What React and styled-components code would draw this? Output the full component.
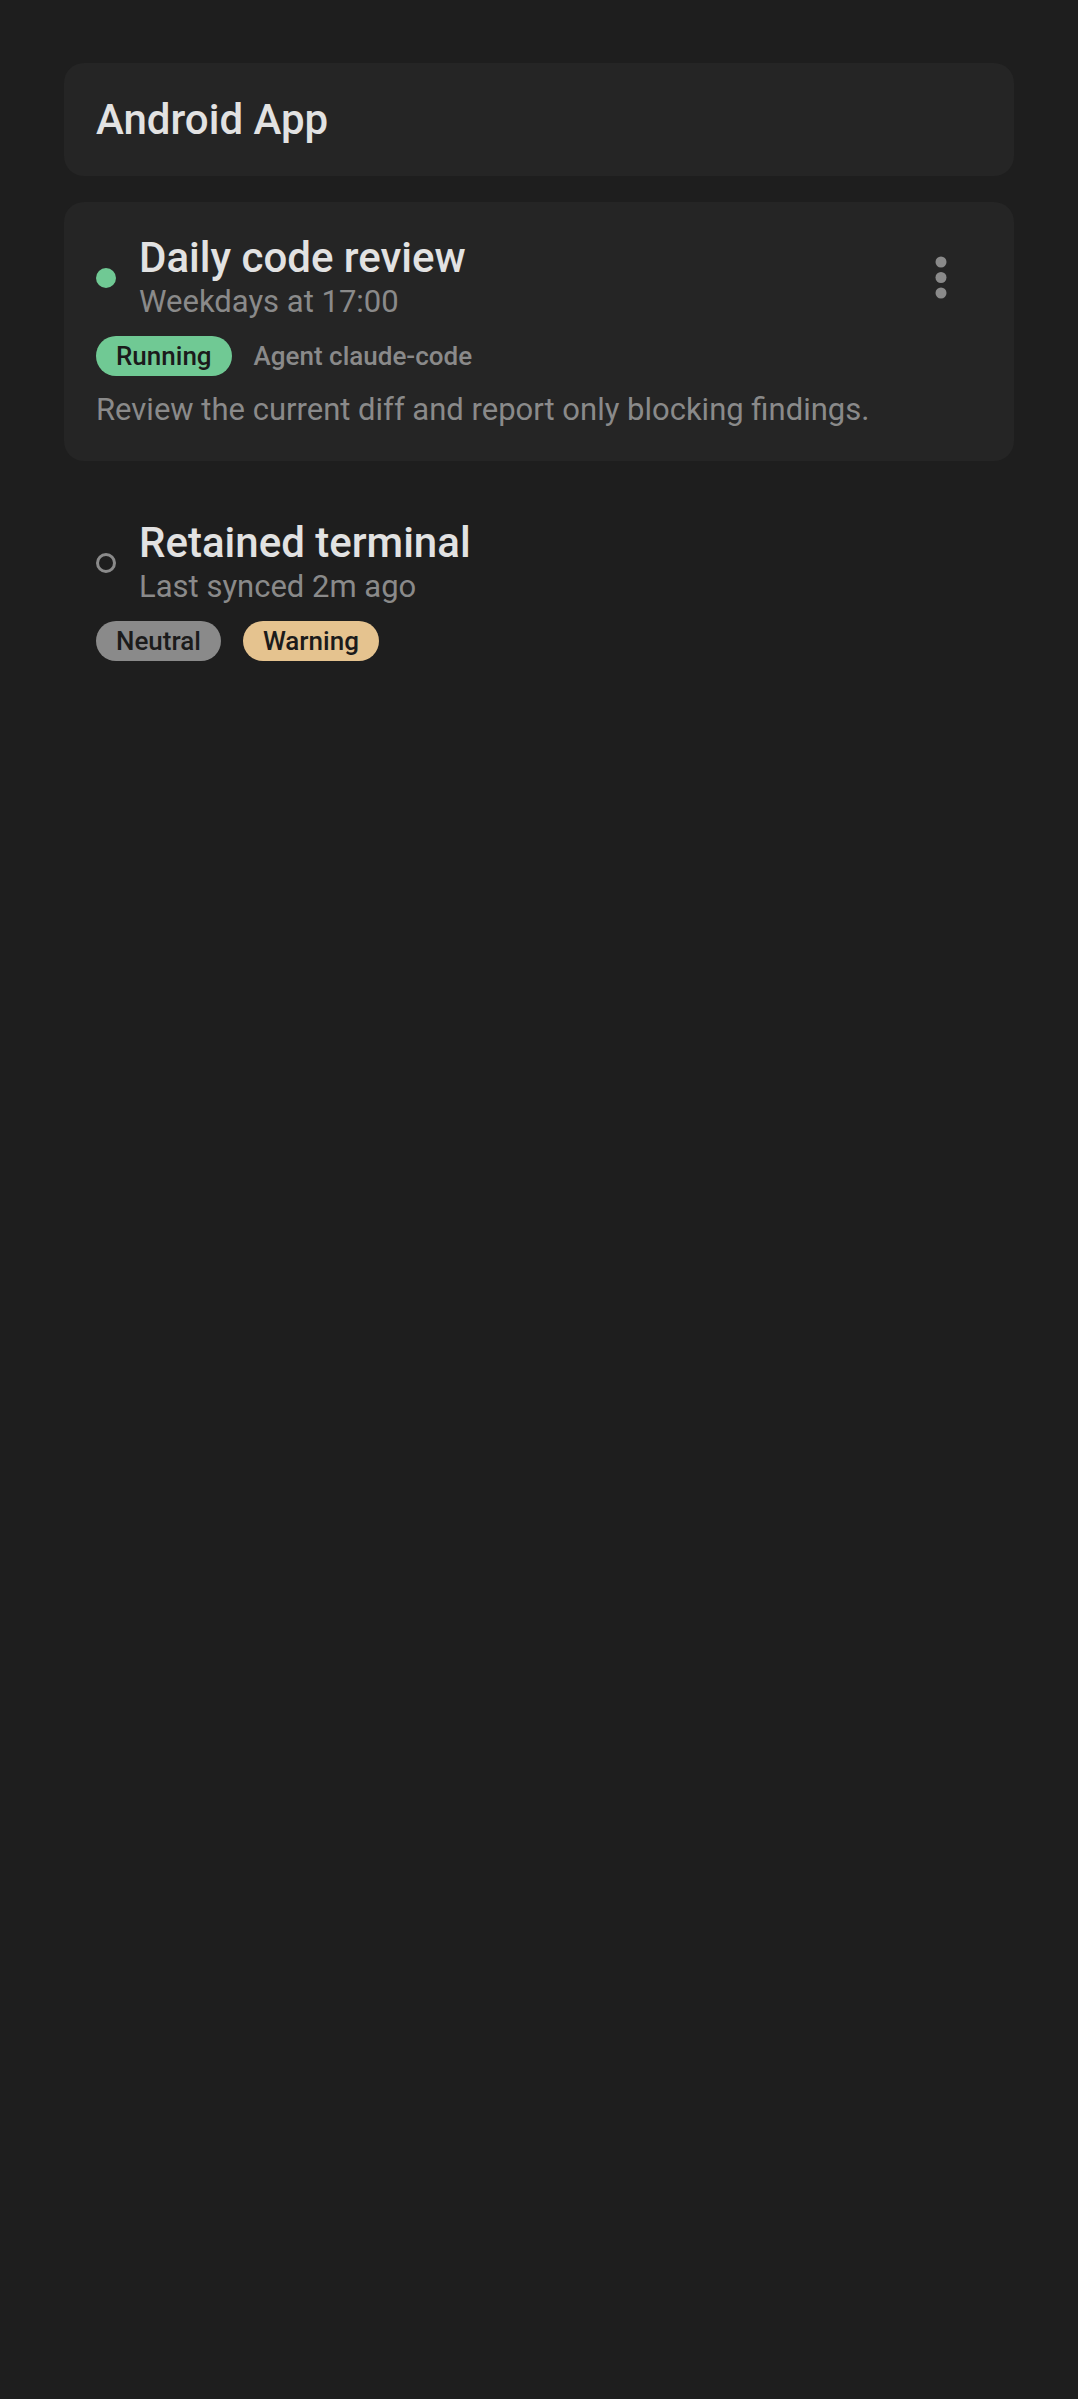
import React from "react";
import styled, { createGlobalStyle } from "styled-components";

const GlobalStyle = createGlobalStyle`
  html, body {
    margin: 0;
    padding: 0;
    background: #1e1e1e;
  }
  body {
    font-family: Roboto, "Noto Sans", "Liberation Sans", sans-serif;
    -webkit-font-smoothing: antialiased;
  }
`;

const Page = styled.div`
  min-height: 2399px;
  box-sizing: border-box;
  padding: 63px 64px;
  display: flex;
  flex-direction: column;
  gap: 26px;
`;

const HeaderCard = styled.div`
  background: #252525;
  border-radius: 20px;
  padding: 32px;
`;

const HeaderTitle = styled.div`
  font-size: 42px;
  line-height: 49px;
  font-weight: 500;
  color: #e2e2e2;
`;

const Card = styled.div`
  background: ${(p) => (p.$flat ? "transparent" : "#252525")};
  border-radius: 20px;
  padding: 32px 32px 31px;
  display: flex;
  flex-direction: column;
`;

const TopRow = styled.div`
  display: flex;
  align-items: center;
  gap: 23px;
`;

const StatusDot = styled.span`
  flex: none;
  width: 20px;
  height: 20px;
  border-radius: 50%;
  box-sizing: border-box;
  background: ${(p) => (p.$active ? "#70c994" : "transparent")};
  border: ${(p) => (p.$active ? "none" : "3px solid #8a8a8a")};
`;

const TitleBlock = styled.div`
  flex: 1;
  display: flex;
  flex-direction: column;
`;

const Title = styled.div`
  font-size: 42px;
  line-height: 48px;
  font-weight: 500;
  color: #e2e2e2;
`;

const Subtitle = styled.div`
  font-size: 31px;
  line-height: 40px;
  color: #8a8a8a;
`;

const MenuButton = styled.button`
  flex: none;
  width: 48px;
  height: 48px;
  margin-right: 17px;
  padding: 0;
  border: none;
  background: transparent;
  display: flex;
  align-items: center;
  justify-content: center;
  cursor: pointer;
`;

const ChipRow = styled.div`
  display: flex;
  align-items: center;
  gap: 22px;
  margin-top: 14px;
`;

const tones = {
  success: "#70c994",
  neutral: "#8a8a8a",
  warning: "#e5c38f",
};

const Chip = styled.span`
  height: 40px;
  padding: 0 20px;
  border-radius: 20px;
  display: inline-flex;
  align-items: center;
  background: ${(p) => tones[p.$tone]};
  color: #1b1b1b;
  font-size: 26px;
  font-weight: 500;
`;

const Meta = styled.span`
  font-size: 26px;
  font-weight: 500;
  color: #8a8a8a;
`;

const Description = styled.div`
  margin-top: 14px;
  font-size: 31px;
  line-height: 40px;
  color: #8a8a8a;
`;

const MoreVert = () => (
  <svg width="12" height="44" viewBox="0 0 12 44">
    <circle cx="6" cy="6" r="5.5" fill="#8a8a8a" />
    <circle cx="6" cy="21.5" r="5.5" fill="#8a8a8a" />
    <circle cx="6" cy="37" r="5.5" fill="#8a8a8a" />
  </svg>
);

export default function App() {
  return (
    <>
      <GlobalStyle />
      <Page>
        <HeaderCard>
          <HeaderTitle>Android App</HeaderTitle>
        </HeaderCard>

        <Card>
          <TopRow>
            <StatusDot $active />
            <TitleBlock>
              <Title>Daily code review</Title>
              <Subtitle>Weekdays at 17:00</Subtitle>
            </TitleBlock>
            <MenuButton aria-label="More options">
              <MoreVert />
            </MenuButton>
          </TopRow>
          <ChipRow>
            <Chip $tone="success">Running</Chip>
            <Meta>Agent claude-code</Meta>
          </ChipRow>
          <Description>
            Review the current diff and report only blocking findings.
          </Description>
        </Card>

        <Card $flat>
          <TopRow>
            <StatusDot />
            <TitleBlock>
              <Title>Retained terminal</Title>
              <Subtitle>Last synced 2m ago</Subtitle>
            </TitleBlock>
          </TopRow>
          <ChipRow>
            <Chip $tone="neutral">Neutral</Chip>
            <Chip $tone="warning">Warning</Chip>
          </ChipRow>
        </Card>
      </Page>
    </>
  );
}
